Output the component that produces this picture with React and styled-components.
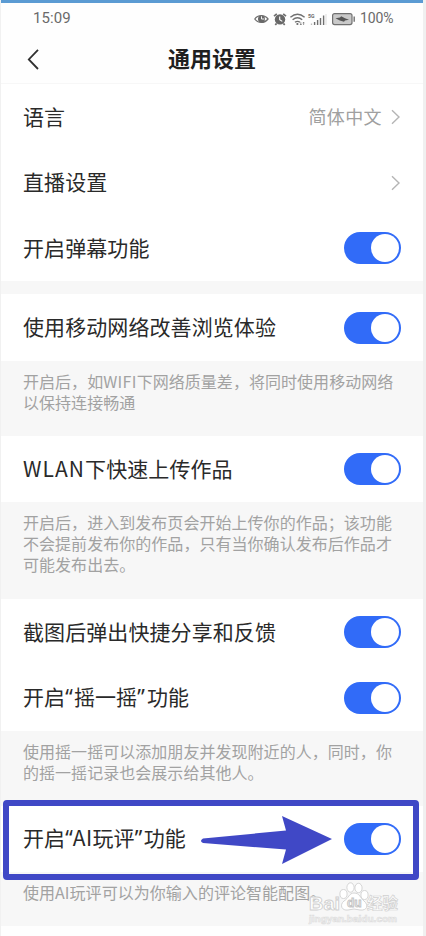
import React from "react";
import styled, { createGlobalStyle } from "styled-components";

const cjk = `"Noto Sans CJK SC", sans-serif`;

const GlobalStyle = createGlobalStyle`
  *, *::before, *::after { box-sizing: border-box; }
  body { margin: 0; background: #fff; overflow: hidden; }
`;

const Screen = styled.main`
  position: relative;
  width: 426px;
  height: 936px;
  overflow: hidden;
  display: flex;
  flex-direction: column;
  background: #fefefe;
  border-left: 1px solid #f1f1f1;
  border-right: 3px solid #f0f0f0;
  font-family: ${cjk};
  color: #2a2a2a;
`;

const TopEdge = styled.div`
  flex: none;
  height: 3px;
  margin: 0 -3px 0 -1px;
  background: #5b9bd3;
`;

const StatusBar = styled.div`
  flex: none;
  height: 31px;
  padding: 0 28px 0 32px;
  display: flex;
  align-items: center;
  justify-content: space-between;
  font: 15px/31px Roboto, sans-serif;
  color: #6a6a6a;
`;

const Clock = styled.span`
  font-size: 15px;
  letter-spacing: 0.1px;
`;

const StatusIcons = styled.div`
  display: flex;
  align-items: center;
`;

const Percent = styled.span`
  margin-left: 4px;
  width: 35px;
  font-size: 14px;
  letter-spacing: -0.1px;
  white-space: nowrap;
`;

const Header = styled.header`
  flex: none;
  height: 50px;
  padding: 0 25px 3px 25px;
  display: grid;
  grid-template-columns: 16px 1fr 16px;
  align-items: center;
  border-bottom: 1px solid #f7f7f7;
`;

const BackIcon = styled.svg`
  margin-top: 3px;
`;

const Title = styled.h1`
  margin: 0;
  text-align: center;
  font-size: 22px;
  line-height: 46px;
  font-weight: 700;
  color: #1f1f1f;
`;

const Row = styled.div`
  flex: none;
  height: ${(p) => p.$h || 66}px;
  padding: 0 22px 0 22px;
  display: flex;
  align-items: center;
  justify-content: space-between;
  background: #fff;
`;

const Label = styled.span`
  padding-bottom: 3px;
  font-size: 21px;
  line-height: 30px;
  letter-spacing: 0.08px;
  white-space: nowrap;
`;

const Quote = styled.span`
  font-family: "Noto Sans", sans-serif;
  letter-spacing: ${(p) => p.$gap || 0}px;
`;

const Latin = styled.span`
  letter-spacing: ${(p) => p.$gap}px;
`;

const Value = styled.span`
  display: flex;
  align-items: center;
  gap: 8px;
  font-size: 18px;
  line-height: 26px;
  letter-spacing: 0.4px;
  color: #a0a0a0;
`;

const ValueText = styled.span`
  padding-bottom: 2px;
`;

const Track = styled.span`
  width: 57px;
  height: 32px;
  padding: 2px;
  border-radius: 16px;
  background: #316bf8;
  display: flex;
  justify-content: flex-end;
`;

const Knob = styled.span`
  width: 28px;
  height: 28px;
  border-radius: 50%;
  background: #fff;
`;

const Gap = styled.div`
  flex: none;
  height: 13px;
  background: #f7f7f7;
`;

const Note = styled.p`
  flex: none;
  margin: 0;
  height: ${(p) => p.$h}px;
  padding: 10px 22px 0;
  font-size: 16px;
  line-height: 21px;
  letter-spacing: 0.04px;
  white-space: nowrap;
  color: #a2a2a2;
  background: #f7f7f7;
`;

const Highlight = styled.div`
  position: absolute;
  left: 2px;
  top: 800px;
  width: 416px;
  height: 80px;
  border: 6px solid #4048c6;
  border-radius: 4px;
`;

const Arrow = styled.svg`
  position: absolute;
  left: 199px;
  top: 815px;
`;

const Watermark = styled.svg`
  position: absolute;
  left: 304px;
  top: 880px;
`;

const Toggle = () => (
  <Track role="switch" aria-checked="true">
    <Knob />
  </Track>
);

const Chevron = () => (
  <svg width="11" height="16" viewBox="0 0 11 16" fill="none" stroke="#b5b5b5" strokeWidth="1.4">
    <path d="M2 1.2 9 8 2 14.8" />
  </svg>
);

const Indicators = () => (
  <svg width="102" height="16" viewBox="0 0 102 16" fill="none" stroke="#707070">
    <path d="M.8 8C3.8 3.5 10.8 3.5 14 8 10.8 12.5 3.8 12.5.8 8Z" strokeWidth="1.3" />
    <circle cx="7.5" cy="8" r="3.5" fill="#686868" stroke="none" />
    <path d="M7.5 5.3V8H10.4" stroke="#fff" strokeWidth=".9" />
    <circle cx="26" cy="8.4" r="5.2" fill="#686868" stroke="none" />
    <path d="M20 5.2 22.8 2.8M32 5.2 29.2 2.8M22.6 12.4 21.3 14M29.4 12.4 30.7 14" strokeWidth="1.7" />
    <path d="M25.7 5.4V8.6L28.3 10.4" stroke="#fff" strokeWidth="1.1" />
    <path d="M36.4 6.2Q43.5.2 50.6 6.2M38.6 8.8Q43.5 4.8 48.2 8.8M41 11.3Q43.5 9.4 46 11.3" strokeWidth="1.4" />
    <circle cx="43.4" cy="13" r="1.1" fill="#686868" stroke="none" />
    <path d="M46.8 11.2V14M46 13 46.8 14 47.6 13M49.6 14V11.2M48.8 12.2 49.6 11.2 50.4 12.2" strokeWidth=".7" />
    <text x="54" y="6.5" fontFamily="Roboto, sans-serif" fontSize="6" fontWeight="700" fill="#686868" stroke="none" textLength="6.5" lengthAdjust="spacingAndGlyphs">5G</text>
    <path d="M57.5 14V12.5" stroke="#bbb" strokeWidth="1.3" />
    <path d="M60.6 14V11M63.6 14V9M66.5 14V7M69.6 14V4.5" strokeWidth="1.4" />
    <path d="M72 14V3" stroke="#ddd" strokeWidth="1" />
    <rect x="78.6" y="2.6" width="19.4" height="11" rx="2" fill="#c9c9c9" strokeWidth="1.2" />
    <path d="M100.2 5.5V10.7" strokeWidth="1.4" />
    <path d="M81.5 7.2 86 6.4 87.2 5.2 91 7.2 95 8.7 91 9.6 90 10.8 85.8 9.4Z" fill="#555" stroke="none" />
  </svg>
);

export default function App() {
  return (
    <>
      <GlobalStyle />
      <Screen>
        <TopEdge />
        <StatusBar>
          <Clock>15:09</Clock>
          <StatusIcons>
            <Indicators />
            <Percent>100%</Percent>
          </StatusIcons>
        </StatusBar>
        <Header>
          <BackIcon width="16" height="22" viewBox="0 0 16 22" fill="none" stroke="#303030" strokeWidth="1.8">
            <path d="M12 1.8 2.8 11.5 12 21" />
          </BackIcon>
          <Title>通用设置</Title>
        </Header>
        <Row>
          <Label>语言</Label>
          <Value>
            <ValueText>简体中文</ValueText>
            <Chevron />
          </Value>
        </Row>
        <Row $h={65}>
          <Label>直播设置</Label>
          <Value>
            <Chevron />
          </Value>
        </Row>
        <Row>
          <Label>开启弹幕功能</Label>
          <Toggle />
        </Row>
        <Gap />
        <Row $h={67}>
          <Label>使用移动网络改善浏览体验</Label>
          <Toggle />
        </Row>
        <Note $h={75}>
          开启后，如<Latin $gap={0.3}>WIFI</Latin>下网络质量差，将同时使用移动网络
          <br />
          以保持连接畅通
        </Note>
        <Row>
          <Label>
            <Latin $gap={1.05}>WLAN</Latin>下快速上传作品
          </Label>
          <Toggle />
        </Row>
        <Note $h={97}>
          开启后，进入到发布页会开始上传你的作品；该功能
          <br />
          不会提前发布你的作品，只有当你确认发布后作品才
          <br />
          可能发布出去。
        </Note>
        <Row>
          <Label>截图后弹出快捷分享和反馈</Label>
          <Toggle />
        </Row>
        <Row>
          <Label>
            开启<Quote $gap={1.2}>“</Quote>摇一摇<Quote $gap={2.2}>”</Quote>功能
          </Label>
          <Toggle />
        </Row>
        <Note $h={75}>
          使用摇一摇可以添加朋友并发现附近的人，同时，你
          <br />
          的摇一摇记录也会展示给其他人。
        </Note>
        <Row>
          <Label>
            开启<Quote>“</Quote>
            <Latin $gap={0.4}>AI</Latin>玩评<Quote $gap={1.6}>”</Quote>功能
          </Label>
          <Toggle />
        </Row>
        <Note $h={54}>使用AI玩评可以为你输入的评论智能配图。</Note>
        <Highlight />
        <Arrow width="133" height="50" viewBox="0 0 133 50" fill="#4048c6">
          <path d="M3 23.5 86 15.5 82 1 132 24 82 49 86 34.5 3 28Q-1 26 3 23.5Z" />
        </Arrow>
        <Watermark width="100" height="50" viewBox="0 0 100 50" fill="#fff" stroke="#d0d0d0" strokeWidth="0.9">
          <g fontFamily="Liberation Sans, sans-serif" fontWeight="700">
            <text x="4" y="29.5" fontSize="19" textLength="31" lengthAdjust="spacingAndGlyphs">Bai</text>
            <ellipse cx="38.5" cy="14" rx="3.6" ry="4.5" />
            <ellipse cx="45.5" cy="7.5" rx="3.6" ry="4.7" />
            <ellipse cx="53.5" cy="8" rx="3.6" ry="4.7" />
            <ellipse cx="59.5" cy="15" rx="3.6" ry="4.5" />
            <path d="M49 13C44 13 44 18 39 21 34 25 37 31 43 30Q49 28 55 30C62 31 64 25 59 21 55 18 55 13 49 13Z" />
            <text x="42" y="27" fontSize="12" fill="#f2f2f2" stroke="#c4c4c4">du</text>
            <text x="62" y="28.5" fontSize="15.5" fontFamily="Noto Sans CJK SC, sans-serif" textLength="31" strokeWidth="0.7">经验</text>
            <text x="4" y="41.5" fontSize="9" fill="#fafafa" stroke="#dedede" strokeWidth="0.7" textLength="88" lengthAdjust="spacingAndGlyphs">jingyan.baidu.com</text>
          </g>
        </Watermark>
      </Screen>
    </>
  );
}
